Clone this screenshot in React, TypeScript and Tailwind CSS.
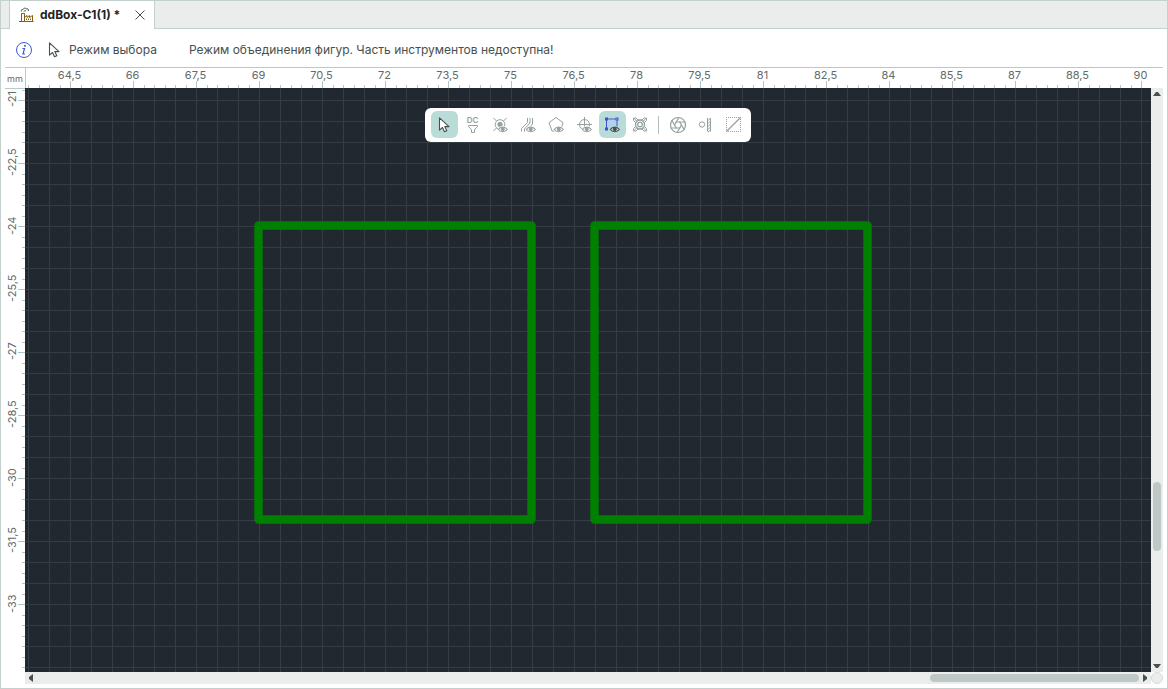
import type { ReactNode } from "react";
import { Aperture } from "lucide-react";

const columns = ["64,5", "66", "67,5", "69", "70,5", "72", "73,5", "75", "76,5", "78", "79,5", "81", "82,5", "84", "85,5", "87", "88,5", "90"];
const rows = ["-21", "-22,5", "-24", "-25,5", "-27", "-28,5", "-30", "-31,5", "-33"];

function Icon({ children }: { children: ReactNode }) {
  return (
    <svg viewBox="0 0 27 27" className="size-[27px]" fill="none" stroke="currentColor" strokeWidth="1" aria-hidden="true">
      {children}
    </svg>
  );
}

function Eye({ backdrop = "#ffffff" }: { backdrop?: string }) {
  return (
    <g>
      <ellipse cx="15.8" cy="18.5" rx="5.2" ry="3.6" fill={backdrop} stroke="none" />
      <path d="M11.3 18.5c2-3.2 7-3.2 9 0c-2 3-7 3-9 0z" fill={backdrop} strokeWidth="1.1" />
      <circle cx="15.8" cy="18.3" r="1.5" fill="currentColor" />
    </g>
  );
}

function Cursor() {
  return <path d="M8.5 6.8v12.4l3-2.7l2 4.3l2.3-1l-2-4.2h4.2z" fill="#ffffff" stroke="#46504e" strokeWidth="1.1" strokeLinejoin="round" />;
}

const tools: { label: string; icon: ReactNode; active?: boolean }[] = [
  { label: "Выбор", active: true, icon: <Icon><Cursor /></Icon> },
  {
    label: "Фильтр DC",
    icon: (
      <Icon>
        <text x="13.5" y="12" textAnchor="middle" className="font-['Inter',sans-serif] text-[8px] font-semibold" fill="currentColor" stroke="none">DC</text>
        <path d="M9.5 14.500h9v1.200l-3 2.800v3h-3v-3l-3-2.800z" />
      </Icon>
    ),
  },
  {
    label: "Контакты",
    icon: (
      <Icon>
        <circle cx="13" cy="13.5" r="4.8" />
        <circle cx="13" cy="13.5" r="2.2" fill="currentColor" />
        <path d="M6.500 7l3 3M19.500 7l-3 3M6.500 20l3-3" />
        <Eye />
      </Icon>
    ),
  },
  {
    label: "Трассы",
    icon: (
      <Icon>
        <path d="M6.500 20.500v-3l6-6V7M9.500 20.500v-2.500l5.500-6V7M12 19l5.500-6V7" />
        <Eye />
      </Icon>
    ),
  },
  {
    label: "Полигоны",
    icon: (
      <Icon>
        <path d="M13 6.500l7 5.200l-2.500 8.300h-8.500l-3-8.300z" strokeLinejoin="round" />
        <Eye />
      </Icon>
    ),
  },
  {
    label: "Отверстия",
    icon: (
      <Icon>
        <circle cx="13.500" cy="13.500" r="5" />
        <path d="M6 13.500h15M13.500 6v15" />
        <Eye />
      </Icon>
    ),
  },
  {
    label: "Фигуры",
    active: true,
    icon: (
      <Icon>
        <rect x="8.500" y="9" width="9" height="9" fill="#b6cfee" stroke="none" />
        <path d="M7.500 9v8M9 8h8M18 9v8" stroke="#3d55c8" />
        <g fill="#dce8f8" stroke="#3d55c8">
          <rect x="6.500" y="7" width="2" height="2" />
          <rect x="17" y="7" width="2" height="2" />
          <rect x="6.500" y="17" width="2" height="2" />
        </g>
        <g className="text-[#46504e]"><Eye backdrop="#badcd8" /></g>
      </Icon>
    ),
  },
  {
    label: "Монтажные элементы",
    icon: (
      <Icon>
        <path d="M6.500 7h2.500l2 2h4l2-2h2.500v2.500l-2 2v4l2 2v2.500H17l-2-2h-4l-2 2H6.500V17.500l2-2v-4l-2-2z" />
        <path d="M7 7.500l3 3M19 7.500l-3 3M7 19.500l3-3M19 19.500l-3-3" />
        <circle cx="13" cy="13.500" r="4.500" fill="#ffffff" strokeWidth="1.400" />
        <circle cx="13" cy="13.500" r="2.300" strokeWidth="1.300" />
      </Icon>
    ),
  },
];

const moreTools: { label: string; icon: ReactNode }[] = [
  { label: "Диафрагма", icon: <Aperture className="size-[18px]" strokeWidth={1.6} aria-hidden="true" /> },
  {
    label: "Зазоры",
    icon: (
      <Icon>
        <circle cx="10" cy="13.500" r="2.700" />
        <path d="M15.500 7v13.500M18.500 7v13.500M15.500 10l3-3M15.500 13l3-3M15.500 16l3-3M15.500 19l3-3M16 21l2.500-2" />
      </Icon>
    ),
  },
  {
    label: "Сетка",
    icon: (
      <Icon>
        <path d="M6 6.500h15M6 20.500h15M6.500 6v15M20.500 6v15" strokeDasharray="1 1" />
        <path d="M6.500 20.500l14-14" strokeWidth="1.200" />
      </Icon>
    ),
  },
];

function ArrowButton({ label, path }: { label: string; path: string }) {
  return (
    <button type="button" aria-label={label} className="size-3 shrink-0">
      <svg viewBox="0 0 12 12" className="size-3" fill="#46504e" aria-hidden="true"><path d={path} /></svg>
    </button>
  );
}

function Tabs() {
  return (
    <header className="flex h-7 border-b border-[#c3d0ce] bg-[#ebedec] pl-2">
      <div className="-mb-px flex items-center border-x border-[#c3d0ce] bg-white pr-1.5 pl-2">
        <svg viewBox="0 0 16 16" className="size-4" fill="none" aria-hidden="true">
          <path d="M3.500 4.500c-.8-1.300 .3-2.300 1.500-2c.5-1.500 2.500-1.700 3.300-.7c1.400-.5 2.700 .6 2 2.200M6 4.500c.2-1 1.400-1 2-.5" stroke="#46504e" />
          <path d="M3.500 14V6.500h3V14M6.500 10.500l2.500-2v2l2.500-2v2l3-2V14M1 14.500h14.500" stroke="#80600c" />
          <path d="M8.500 11.500v1.500M10.500 11.500v1.500M12.500 11.500v1.500" stroke="#80600c" />
        </svg>
        <a href="#board" className="ml-1.5 text-xs leading-5 font-bold text-[#1f2423]">ddBox-C1(1) *</a>
        <button type="button" aria-label="Закрыть" className="ml-3 size-4">
          <svg viewBox="0 0 16 16" className="size-4" stroke="#46504e" aria-hidden="true"><path d="M3.500 3.500l9 9M12.500 3.500l-9 9" /></svg>
        </button>
      </div>
    </header>
  );
}

function StatusBar() {
  return (
    <div className="flex h-[38px] items-center pt-1 pl-2.5 text-xs leading-5 text-[#46504e]">
      <svg viewBox="0 0 18 18" className="ml-1 size-[18px] shrink-0" fill="none" stroke="#4257cf" aria-hidden="true">
        <circle cx="9" cy="9" r="7.500" />
        <path d="M7.500 7.500h2l-1.500 5.500h2" strokeWidth="1.200" />
        <circle cx="10" cy="4.800" r=".6" fill="#4257cf" />
      </svg>
      <svg viewBox="6 5 14 18" className="ml-3.5 h-[18px] w-3.5 shrink-0" fill="none" aria-hidden="true"><Cursor /></svg>
      <span className="ml-2">Режим выбора</span>
      <p className="ml-8">Режим объединения фигур. Часть инструментов недоступна!</p>
    </div>
  );
}

function ColumnRuler() {
  return (
    <div className="relative h-5 min-w-0 overflow-hidden border-l border-[#b9c9c6]">
      <div className="flex pl-3">
        {columns.map((value) => (
          <span key={value} className="w-[63px] shrink-0 text-center text-[11px] leading-[14px]">{value}</span>
        ))}
      </div>
      <svg className="absolute inset-0 size-full" stroke="#b4c5c2" shapeRendering="crispEdges" aria-hidden="true">
        <pattern id="column-ticks" x="44" width="63" height="20" patternUnits="userSpaceOnUse">
          <path d="M.5 13v7M11.500 17v3M21.500 17v3M32.500 17v3M42.500 17v3M53.500 17v3" />
        </pattern>
        <rect width="100%" height="100%" fill="url(#column-ticks)" stroke="none" />
      </svg>
    </div>
  );
}

function RowRuler() {
  return (
    <div className="relative min-h-0 overflow-hidden border-t border-[#b9c9c6]">
      <div className="-mt-[21px] flex flex-col">
        {rows.map((value) => (
          <span key={value} className="flex h-[63px] w-3.5 shrink-0 rotate-180 items-center justify-center text-[11px] leading-[14px] [writing-mode:vertical-rl]">{value}</span>
        ))}
      </div>
      <svg className="absolute inset-0 size-full" stroke="#b4c5c2" shapeRendering="crispEdges" aria-hidden="true">
        <pattern id="row-ticks" y="11" width="20" height="63" patternUnits="userSpaceOnUse">
          <path d="M17 .5h3M17 11.500h3M17 21.500h3M17 32.500h3M17 42.500h3M17 53.500h3" />
        </pattern>
        <pattern id="row-label-ticks" y="11" width="20" height="63" patternUnits="userSpaceOnUse">
          <path d="M13 .5h7" />
        </pattern>
        <rect width="100%" height="100%" fill="url(#row-ticks)" stroke="none" />
        <rect width="100%" height={rows.length * 63} fill="url(#row-label-ticks)" stroke="none" />
      </svg>
    </div>
  );
}

function Toolbar() {
  return (
    <div role="toolbar" className="absolute inset-x-0 top-5 mx-auto flex w-max items-center gap-px rounded-md bg-white pt-[3px] pr-1 pb-1 pl-1.5 text-[#94a19e]">
      {tools.map((tool) => (
        <button key={tool.label} type="button" aria-label={tool.label} aria-pressed={!!tool.active} className="grid size-[27px] place-items-center rounded-md aria-pressed:bg-[#badcd8]">
          {tool.icon}
        </button>
      ))}
      <span className="mr-1 ml-[3px] h-[18px] w-px bg-[#b4c0be]" />
      {moreTools.map((tool) => (
        <button key={tool.label} type="button" aria-label={tool.label} className="grid size-[27px] place-items-center">
          {tool.icon}
        </button>
      ))}
    </div>
  );
}

function Board() {
  return (
    <main id="board" className="relative min-h-0 min-w-0 overflow-hidden bg-[#22282f]">
      <svg className="absolute inset-0 size-full" aria-hidden="true">
        <pattern id="grid" x="3" y="12" width="21" height="21" patternUnits="userSpaceOnUse">
          <path d="M0 .5h21M.5 0v21" stroke="#343d43" shapeRendering="crispEdges" />
        </pattern>
        <rect width="100%" height="100%" fill="url(#grid)" />
        <g fill="none" stroke="#008000" strokeWidth="8.400" strokeLinejoin="round">
          <rect x="233.500" y="137.500" width="273" height="294" />
          <rect x="569.500" y="137.500" width="273" height="294" />
        </g>
      </svg>
      <Toolbar />
    </main>
  );
}

export default function App() {
  return (
    <div className="flex h-screen flex-col border border-[#c3d0ce] bg-white font-['Inter',sans-serif]">
      <Tabs />
      <StatusBar />
      <div className="mx-1 mb-1 grid min-h-0 flex-1 grid-cols-[20px_minmax(0,1fr)_12px] grid-rows-[20px_minmax(0,1fr)_12px] border-t border-[#b9c9c6] text-[#626b69]">
        <div className="text-center text-[9px] leading-[22px]">mm</div>
        <ColumnRuler />
        <div />
        <RowRuler />
        <Board />
        <div className="flex flex-col items-center bg-[#ebedec]">
          <ArrowButton label="Вверх" path="M2 8l3-4h2l3 4z" />
          <div className="flex-[382]" />
          <div className="w-2 flex-[69] rounded-full bg-[#bec9c7]" />
          <div className="flex-[109]" />
          <ArrowButton label="Вниз" path="M2 4l3 4h2l3-4z" />
        </div>
        <div />
        <div className="flex items-center bg-[#ebedec]">
          <ArrowButton label="Влево" path="M8 2l-4 3v2l4 3z" />
          <div className="flex-[893]" />
          <div className="h-2 flex-[209] rounded-full bg-[#bec9c7]" />
          <ArrowButton label="Вправо" path="M4 2l4 3v2l-4 3z" />
        </div>
        <div className="rounded-full border border-[#d0dbd9] bg-[#ebedec]" />
      </div>
    </div>
  );
}
